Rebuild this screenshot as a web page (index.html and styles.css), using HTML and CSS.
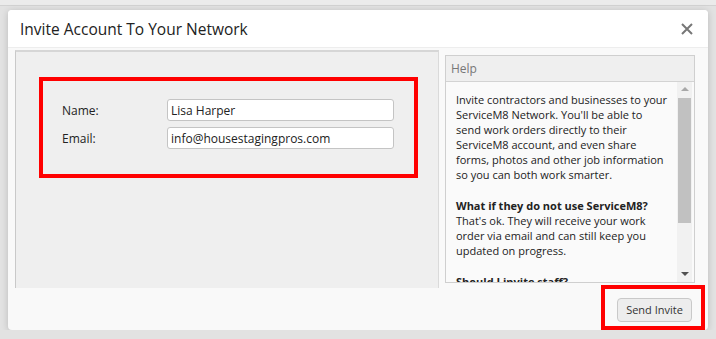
FILE: index.html
```html
<!DOCTYPE html>
<html lang="en">
<head>
  <meta charset="UTF-8" />
  <title>Invite Account To Your Network</title>
  <link rel="stylesheet" href="styles.css">
</head>
<body>

  <!-- barra do topo -->
  <div class="topbar"></div>

  <!-- Janela de convite -->
  <div class="modal">
    <div class="modal-header">
      <h1>Invite Account To Your Network</h1>
      <button class="close" title="Close">
        <svg width="12" height="12" viewBox="0 0 12 12">
          <path d="M1 1 L11 11 M11 1 L1 11" stroke="#777" stroke-width="2" fill="none" />
        </svg>
      </button>
    </div>

    <div class="modal-body">
      <div class="form-panel">
        <div class="highlight form-box">
          <div class="row">
            <label for="inviteName">Name:</label>
            <input type="text" id="inviteName" value="Lisa Harper" />
          </div>
          <div class="row">
            <label for="inviteEmail">Email:</label>
            <input type="text" id="inviteEmail" value="info@housestagingpros.com" />
          </div>
        </div>
      </div>

      <div class="help">
        <div class="help-title">Help</div>
        <div class="help-body">
          <div class="help-text">
            <p>Invite contractors and businesses to your ServiceM8 Network. You'll be able to send work orders directly to their ServiceM8 account, and even share forms, photos and other job information so you can both work smarter.</p>
            <p><b>What if they do not use ServiceM8?</b><br>That's ok. They will receive your work order via email and can still keep you updated on progress.</p>
            <p><b>Should I invite staff?</b><br>No. Staff should be added from the Staff Members screen.</p>
          </div>
          <div class="scrollbar">
            <span class="arrow up"></span>
            <span class="thumb"></span>
            <span class="arrow down"></span>
          </div>
        </div>
      </div>
    </div>

    <div class="modal-footer">
      <div class="highlight btn-box">
        <button class="btn">Send Invite</button>
      </div>
    </div>
  </div>

</body>
</html>
```

FILE: styles.css
```css
body {
  margin: 0;
  background: #e2e2e2;
  font-family: "Open Sans", Arial, sans-serif;
  color: #222;
}

.topbar {
  height: 5px;
  background: #ebebeb;
  border-bottom: 1px solid #d2d2d2;
}

.modal {
  margin: 4px 0 0 8px;
  width: 700px;
  height: 320px;
  background: #f9f9f9;
  border-radius: 4px;
  box-shadow: 0 1px 7px rgba(0, 0, 0, 0.18);
  display: flex;
  flex-direction: column;
}

.modal-header {
  height: 37px;
  background: #fff;
  border-bottom: 1px solid #ededed;
  border-radius: 4px 4px 0 0;
  display: flex;
  align-items: center;
  justify-content: space-between;
}

.modal-header h1 {
  margin: 0 0 0 12px;
  font-size: 15.5px;
  font-weight: normal;
  color: #222;
}

.close {
  margin-right: 15px;
  padding: 0;
  border: none;
  background: none;
  width: 12px;
  height: 12px;
  display: flex;
  cursor: pointer;
}

.modal-body {
  display: flex;
  padding: 2px 12px 0 7px;
  height: 238px;
}

.form-panel {
  width: 424px;
  box-sizing: border-box;
  background: #efefef;
  border-top: 2px solid #d6d6d6;
  border-left: 1px solid #c9c9c9;
  border-right: 1px solid #dadada;
}

/* caixas vermelhas de destaque */
.highlight {
  border: 4px solid #ff0000;
}

.form-box {
  margin: 25px 0 0 23px;
  width: 379px;
  box-sizing: border-box;
  padding: 18px 0 25px 19px;
  display: flex;
  flex-direction: column;
  gap: 6px;
}

.row {
  display: flex;
  align-items: center;
}

.row label {
  width: 105px;
  font-size: 12px;
}

.row input {
  width: 227px;
  height: 22px;
  box-sizing: border-box;
  border: 1px solid #c4c4c4;
  border-radius: 3px;
  padding: 0 3px;
  font-family: "Open Sans", Arial, sans-serif;
  font-size: 12px;
  color: #222;
  background: #fff;
}

.help {
  margin: 5px 0 0 6px;
  width: 250px;
  height: 228px;
  box-sizing: border-box;
  border: 1px solid #cfcfcf;
  display: flex;
  flex-direction: column;
}

.help-title {
  height: 25px;
  line-height: 25px;
  padding-left: 5px;
  background: #efefef;
  border-bottom: 1px solid #d3d3d3;
  color: #777;
  font-size: 12px;
}

.help-body {
  flex: 1;
  display: flex;
  background: #fafafa;
  overflow: hidden;
}

.help-text {
  flex: 1;
  padding: 10px 0 0 10px;
  font-size: 11px;
  line-height: 15px;
  color: #222;
}

.help-text p {
  width: 212px;
  margin: 0 0 16px;
}

.scrollbar {
  width: 15px;
  margin-right: 2px;
  background: #f1f1f1;
  display: flex;
  flex-direction: column;
  align-items: center;
}

.arrow {
  width: 0;
  height: 0;
  border-left: 4px solid transparent;
  border-right: 4px solid transparent;
}

.arrow.up {
  margin-top: 5px;
  border-bottom: 4px solid #a8a8a8;
}

.arrow.down {
  margin-top: auto;
  margin-bottom: 6px;
  border-top: 4px solid #505050;
}

.thumb {
  margin-top: 7px;
  width: 13px;
  height: 125px;
  background: #c1c1c1;
}

.modal-footer {
  flex: 1;
  display: flex;
  justify-content: flex-end;
  align-items: flex-start;
}

.btn-box {
  margin: -3px 3px 0 0;
  padding: 8px 9px 4px 12px;
}

.btn {
  width: 75px;
  height: 24px;
  padding: 0;
  border: 1px solid #c9c9c9;
  border-radius: 4px;
  background: #ededed;
  color: #333;
  font-family: "Open Sans", Arial, sans-serif;
  font-size: 11px;
  cursor: pointer;
}
```
